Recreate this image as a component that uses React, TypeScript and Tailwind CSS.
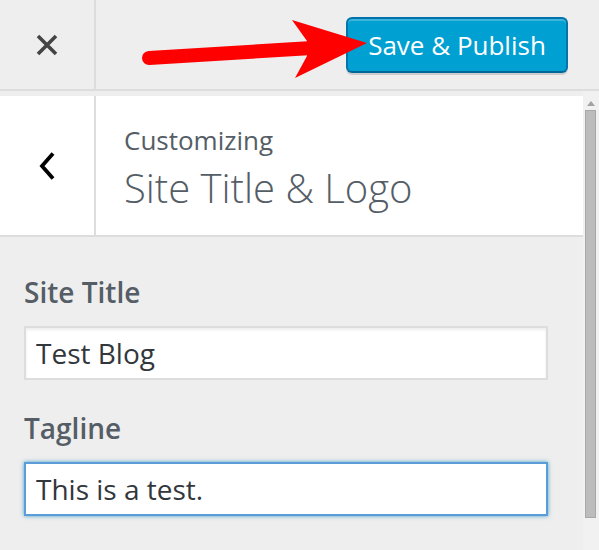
import React from 'react'

// Customizer sidebar, header + "Site Title & Logo" section
export default function App() {
  return (
    <div className="relative flex h-[550px] w-[599px] flex-col overflow-hidden bg-[#eee] font-['Open_Sans','Liberation_Sans',sans-serif] text-[#555d66]">
      <header className="flex h-[91px] shrink-0 items-center border-b-2 border-[#ddd]">
        <button className="flex h-full w-[96px] items-center justify-center border-r-2 border-[#ddd]">
          <svg width="24" height="24" viewBox="0 0 24 24">
            <path d="M3 3L21 21M21 3L3 21" stroke="#444" strokeWidth={3.6} strokeLinecap="butt" />
          </svg>
        </button>
        <div className="flex-1" />
        <button className="mr-[31px] mt-[1px] flex h-[56px] w-[222px] items-center justify-center rounded-[6px] border-2 border-[#0073aa] border-b-[#006799] bg-[#00a0d2] text-[26px] leading-none text-white shadow-[inset_0_2px_0_rgba(120,200,230,0.5),0_2px_0_#ccc]">
          Save &amp; Publish
        </button>
      </header>

      <div className="flex flex-1">
        <div className="flex flex-1 flex-col pt-[5px]">
          <div className="flex h-[141px] border-b-2 border-[#ddd] bg-white">
            <div className="flex w-[96px] items-center justify-center border-r-2 border-[#ddd]">
              <svg width="18" height="28" viewBox="0 0 18 28" className="ml-[1px]">
                <path d="M14 1.5L3 14L14 26.5" fill="none" stroke="#000" strokeWidth={3.8} />
              </svg>
            </div>
            <div className="flex flex-col pl-[28px] pt-[26px]">
              <span className="text-[26px] leading-[36px]">Customizing</span>
              <span className="mt-[6px] text-[40px] font-light leading-[48px]">Site Title &amp; Logo</span>
            </div>
          </div>

          <div className="flex flex-col px-[24px]">
            <label className="mt-[37px] text-[28px] font-semibold leading-[36px]">Site Title</label>
            <input
              className="mt-[16px] h-[54px] w-[524px] border-2 border-[#ddd] bg-white pl-[10px] text-[28px] text-[#32373c] shadow-[inset_0_2px_3px_rgba(0,0,0,0.07)] outline-none"
              defaultValue="Test Blog"
              readOnly
            />
            <label className="mt-[30px] text-[28px] font-semibold leading-[36px]">Tagline</label>
            <input
              className="mt-[16px] h-[54px] w-[524px] border-2 border-[#5b9dd9] bg-white pl-[10px] text-[28px] text-[#32373c] shadow-[0_0_4px_rgba(30,140,190,0.8)] outline-none"
              defaultValue="This is a test."
              readOnly
            />
          </div>
        </div>

        {/* scrollbar */}
        <div className="flex w-[16px] flex-col bg-[#f1f1f1]">
          <div className="mt-[10px] ml-[4px] h-0 w-0 border-x-[4px] border-b-[5px] border-x-transparent border-b-[#a3a3a3]" />
          <div className="mt-[4px] ml-[2px] h-[408px] w-[11px] border border-[#a8a8a8] bg-[#bcbcbc]" />
        </div>
      </div>

      {/* red annotation arrow */}
      <svg className="pointer-events-none absolute inset-0" width="599" height="550" viewBox="0 0 599 550">
        <line x1="149" y1="58" x2="312" y2="48" stroke="#f00" strokeWidth={14} strokeLinecap="round" />
        <polygon points="292,20 367,43 295,78 307,56 307,41" fill="#f00" />
      </svg>
    </div>
  )
}
